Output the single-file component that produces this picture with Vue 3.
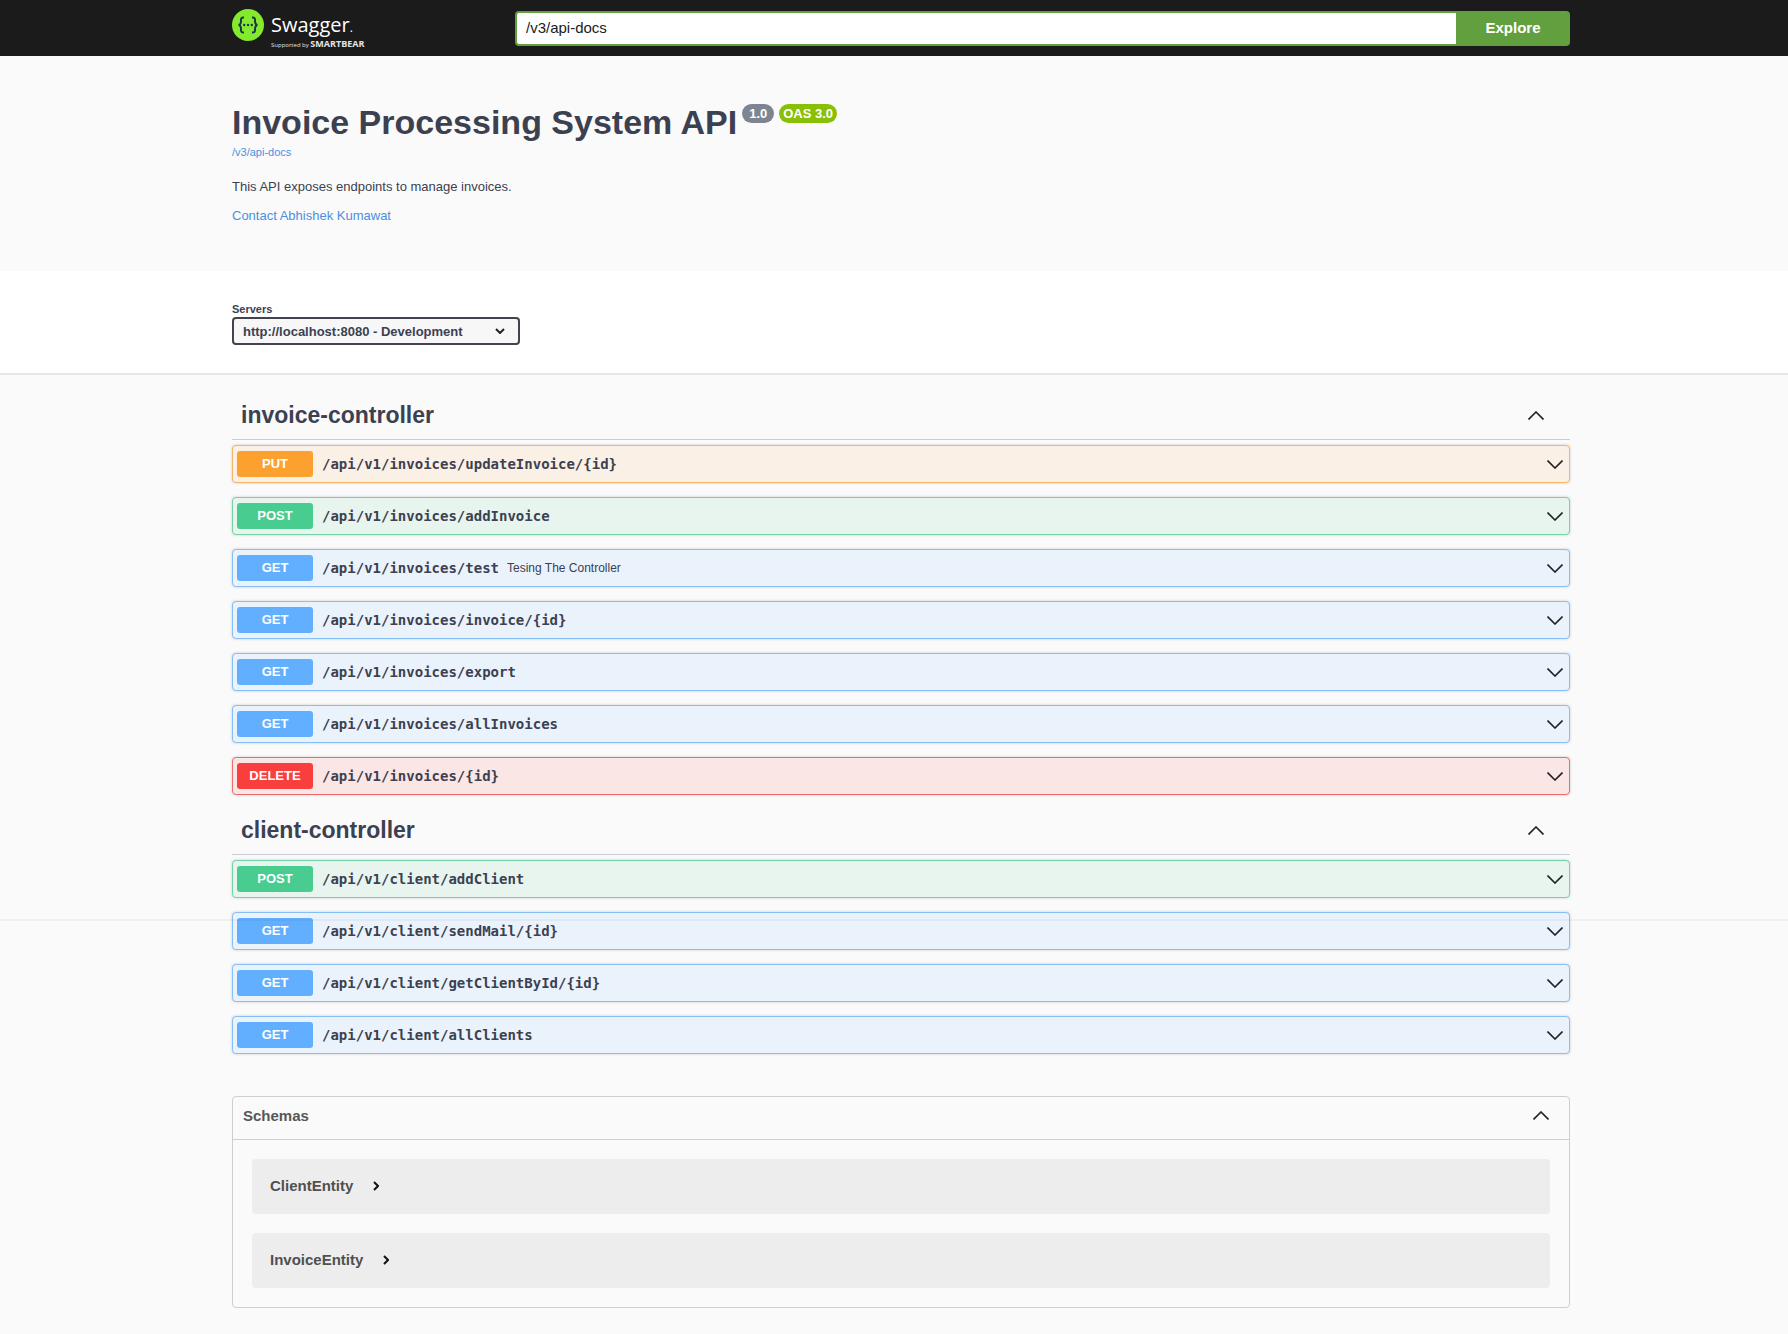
<script setup>
import { ref } from 'vue'

const definitionUrl = ref('/v3/api-docs')
const server = ref('http://localhost:8080')

const tags = [
  {
    name: 'invoice-controller',
    operations: [
      { method: 'put', path: '/api/v1/invoices/updateInvoice/{id}' },
      { method: 'post', path: '/api/v1/invoices/addInvoice' },
      { method: 'get', path: '/api/v1/invoices/test', summary: 'Tesing The Controller' },
      { method: 'get', path: '/api/v1/invoices/invoice/{id}' },
      { method: 'get', path: '/api/v1/invoices/export' },
      { method: 'get', path: '/api/v1/invoices/allInvoices' },
      { method: 'delete', path: '/api/v1/invoices/{id}' },
    ],
  },
  {
    name: 'client-controller',
    operations: [
      { method: 'post', path: '/api/v1/client/addClient' },
      { method: 'get', path: '/api/v1/client/sendMail/{id}' },
      { method: 'get', path: '/api/v1/client/getClientById/{id}' },
      { method: 'get', path: '/api/v1/client/allClients' },
    ],
  },
]

const schemas = ['ClientEntity', 'InvoiceEntity']
</script>

<template>
  <div class="page">
    <header class="topbar">
      <div class="wrapper topbar-inner">
        <a class="logo" href="#" aria-label="Swagger, supported by SmartBear">
          <svg class="logo-mark" viewBox="0 0 32 32" aria-hidden="true">
            <circle cx="16" cy="16" r="16" fill="#85ea2d" />
            <g fill="none" stroke="#173647" stroke-width="2">
              <path d="M12 8.6C9.4 8.4 8.9 9.4 9 11.4C9.1 13.8 9.1 15.6 6.6 16C9.1 16.4 9.1 18.2 9 20.6C8.9 22.6 9.4 23.6 12 23.4" />
              <path d="M20 8.6C22.6 8.4 23.1 9.4 23 11.4C22.9 13.8 22.9 15.6 25.4 16C22.9 16.4 22.9 18.2 23 20.6C23.1 22.6 22.6 23.6 20 23.4" />
            </g>
            <g fill="#173647">
              <circle cx="12.2" cy="16" r="1.2" />
              <circle cx="16" cy="16" r="1.2" />
              <circle cx="19.8" cy="16" r="1.2" />
            </g>
          </svg>
          <span class="logo-text">
            <span class="logo-name">Swagger<span class="logo-dot">.</span></span>
            <span class="logo-by">Supported by <b>SMARTBEAR</b></span>
          </span>
        </a>
        <form class="explore" @submit.prevent>
          <input v-model="definitionUrl" type="text" aria-label="API definition URL" />
          <button type="submit">Explore</button>
        </form>
      </div>
    </header>

    <section class="wrapper info">
      <div class="title-row">
        <h1>Invoice Processing System API</h1>
        <span class="badge">1.0</span>
        <span class="badge badge-oas">OAS 3.0</span>
      </div>
      <a class="spec-link" href="#">/v3/api-docs</a>
      <p>This API exposes endpoints to manage invoices.</p>
      <a class="contact" href="#">Contact Abhishek Kumawat</a>
    </section>

    <section class="servers">
      <div class="wrapper">
        <label for="servers">Servers</label>
        <div class="select">
          <select id="servers" v-model="server">
            <option value="http://localhost:8080">http://localhost:8080 - Development</option>
          </select>
          <svg viewBox="0 0 10 6" aria-hidden="true"><path d="M1 1L5 5L9 1" /></svg>
        </div>
      </div>
    </section>

    <main class="wrapper">
      <section v-for="tag in tags" :key="tag.name" class="tag">
        <h2>
          <button class="tag-toggle" type="button" aria-expanded="true">
            <span>{{ tag.name }}</span>
            <svg class="chevron" viewBox="0 0 16 9" aria-hidden="true"><path d="M0.5 8.5L8 1L15.5 8.5" /></svg>
          </button>
        </h2>
        <div class="operations">
          <button
            v-for="op in tag.operations"
            :key="op.path"
            type="button"
            class="operation"
            :class="op.method"
          >
            <span class="method">{{ op.method.toUpperCase() }}</span>
            <span class="path">{{ op.path }}</span>
            <span v-if="op.summary" class="summary">{{ op.summary }}</span>
            <svg class="chevron" viewBox="0 0 16 9" aria-hidden="true"><path d="M0.5 0.5L8 8L15.5 0.5" /></svg>
          </button>
        </div>
      </section>

      <section class="schemas">
        <h3>
          <button class="schemas-toggle" type="button" aria-expanded="true">
            <span>Schemas</span>
            <svg class="chevron" viewBox="0 0 16 9" aria-hidden="true"><path d="M0.5 8.5L8 1L15.5 8.5" /></svg>
          </button>
        </h3>
        <div class="schema-list">
          <button v-for="schema in schemas" :key="schema" class="schema" type="button">
            <span>{{ schema }}</span>
            <svg viewBox="0 0 6 10" aria-hidden="true"><path d="M1 1L5 5L1 9" /></svg>
          </button>
        </div>
      </section>
    </main>
    <div class="fold-line"></div>
  </div>
</template>

<style>
body {
  margin: 0;
  background: #fafafa;
}
</style>

<style scoped>
.page {
  position: relative;
  padding-bottom: 27px;
  color: #3b4151;
  font-family: "Liberation Sans", Arial, sans-serif;
  font-size: 13px;
}

.page * {
  box-sizing: border-box;
}

button,
input,
select {
  margin: 0;
  color: inherit;
  font: inherit;
}

button {
  padding: 0;
  border: 0;
  background: none;
  text-align: left;
  cursor: pointer;
}

h1,
h2,
h3,
p {
  margin: 0;
}

a {
  color: #4990e2;
  text-decoration: none;
}

svg {
  flex: none;
}

.wrapper {
  max-width: 1378px;
  margin: 0 auto;
  padding: 0 13px 0 27px;
}

.topbar {
  background: #1b1b1b;
}

.topbar-inner {
  display: flex;
  align-items: center;
  height: 56px;
}

.logo {
  display: flex;
  width: 283px;
  flex: none;
  gap: 7px;
  height: 38px;
  color: #fff;
  font-family: "Open Sans", sans-serif;
}

.logo-mark {
  width: 32px;
  height: 32px;
}

.logo-text {
  display: flex;
  flex-direction: column;
  white-space: nowrap;
}

.logo-name {
  padding-top: 4px;
  font-size: 20px;
  line-height: 24px;
}

.logo-dot {
  font-size: 12px;
}

.logo-by {
  color: #e4e4e4;
  font-size: 6px;
  line-height: 8px;
}

.logo-by b {
  font-size: 9px;
}

.explore {
  display: flex;
  flex: 1;
  height: 35px;
}

.explore input {
  flex: 1;
  min-width: 0;
  padding: 0 9px 2px;
  border: 2px solid #62a03f;
  border-right: 0;
  border-radius: 4px 0 0 4px;
  outline: none;
  background: #fff;
  color: #1b1b1b;
  font-size: 15px;
}

.explore button {
  width: 114px;
  padding-bottom: 2px;
  border-radius: 0 4px 4px 0;
  background: #62a03f;
  color: #fff;
  font-size: 15px;
  font-weight: 700;
  text-align: center;
}

.info {
  padding-top: 46px;
  padding-bottom: 47px;
}

.title-row {
  display: flex;
  align-items: flex-start;
  gap: 5px;
}

h1 {
  padding-bottom: 2px;
  font-size: 34px;
  line-height: 40px;
}

.badge {
  margin-top: 2px;
  padding: 0 7px;
  border-radius: 10px;
  background: #7d8492;
  color: #fff;
  font-size: 13px;
  font-weight: 700;
  line-height: 19px;
}

.badge-oas {
  padding: 0 4px;
  background: #89bf04;
}

.spec-link {
  display: block;
  font-size: 11px;
  line-height: 16px;
}

.info p {
  margin-top: 19px;
  line-height: 16px;
}

.contact {
  display: block;
  margin-top: 13px;
  line-height: 16px;
}

.servers {
  padding: 31px 0 28px;
  border-bottom: 2px solid #e6e6e6;
  background: #fff;
}

.servers label {
  display: block;
  margin-bottom: 1px;
  font-size: 11px;
  font-weight: 700;
  line-height: 14px;
}

.select {
  position: relative;
  width: 288px;
}

.select select {
  display: block;
  width: 100%;
  height: 28px;
  padding: 0 36px 0 9px;
  border: 2px solid #41444e;
  border-radius: 4px;
  appearance: none;
  background: #f7f7f7;
  font-weight: 700;
}

.select svg {
  position: absolute;
  top: 11px;
  right: 15px;
  width: 10px;
  height: 6px;
  fill: none;
  stroke: #222;
  stroke-width: 2;
  pointer-events: none;
}

.chevron {
  width: 16px;
  height: 9px;
  margin-left: auto;
  fill: none;
  stroke: #222;
  stroke-width: 1.6;
}

.tag-toggle {
  display: flex;
  align-items: center;
  width: 100%;
  height: 50px;
  padding: 1px 26px 0 9px;
  border-bottom: 1px solid #c9cdd4;
  font-size: 23px;
  font-weight: 700;
}

.tag {
  padding-top: 15px;
}

.tag + .tag {
  padding-top: 10px;
}

.operations {
  display: flex;
  flex-direction: column;
  gap: 14px;
  padding-top: 5px;
}

.operation {
  display: flex;
  align-items: center;
  height: 38px;
  padding: 0 6px 0 4px;
  border: 1px solid;
  border-radius: 4px;
  box-shadow: 0 0 3px rgba(0, 0, 0, 0.19);
}

.method {
  width: 76px;
  border-radius: 3px;
  color: #fff;
  font-weight: 700;
  line-height: 26px;
  text-align: center;
}

.path {
  padding-left: 9px;
  font-family: "DejaVu Sans Mono", monospace;
  font-size: 14px;
  font-weight: 700;
}

.summary {
  padding-left: 8px;
  font-size: 12px;
}

.put {
  border-color: #f5b566;
  background: #fbf0e5;
}

.put .method {
  background: #fca130;
}

.post {
  border-color: #73d3a6;
  background: #e7f5ee;
}

.post .method {
  background: #49cc90;
}

.get {
  border-color: #86bff5;
  background: #eaf3fb;
}

.get .method {
  background: #61affe;
}

.delete {
  border-color: #ee6b6b;
  background: #fbe6e6;
}

.delete .method {
  background: #f93e3e;
}

.schemas {
  margin-top: 42px;
  border: 1px solid #cdced1;
  border-radius: 4px;
}

.schemas-toggle {
  display: flex;
  align-items: center;
  width: 100%;
  height: 43px;
  padding: 0 20px 6px 10px;
  border-bottom: 1px solid #cdced1;
  color: #575757;
  font-size: 15px;
  font-weight: 700;
}

.schema-list {
  display: flex;
  flex-direction: column;
  gap: 19px;
  padding: 19px;
}

.schema {
  display: flex;
  align-items: center;
  gap: 20px;
  height: 55px;
  padding: 0 18px 2px;
  border-radius: 4px;
  background: #ededed;
  color: #505050;
  font-size: 15px;
  font-weight: 700;
}

.schema svg {
  width: 6px;
  height: 10px;
  fill: none;
  stroke: #111;
  stroke-width: 2;
}

.fold-line {
  position: absolute;
  top: 919px;
  left: 0;
  width: 100%;
  height: 2px;
  background: rgba(0, 0, 0, 0.04);
  pointer-events: none;
}
</style>
